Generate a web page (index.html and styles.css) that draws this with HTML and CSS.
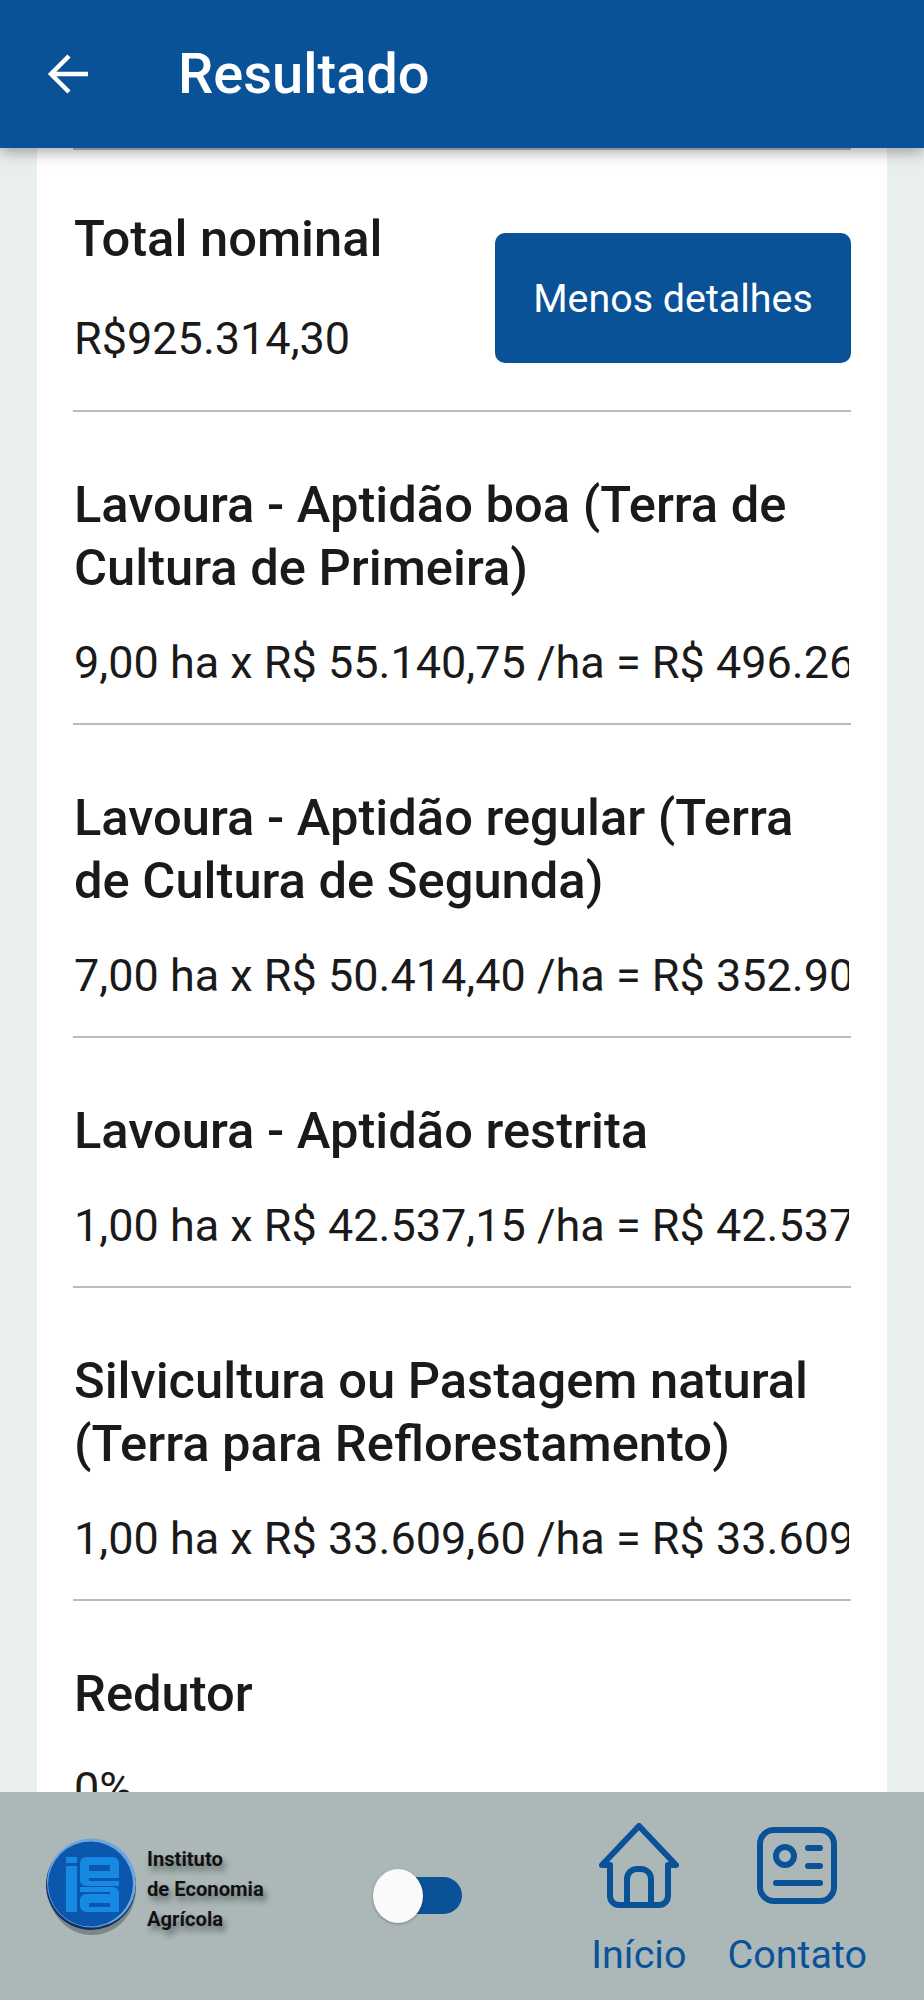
FILE: index.html
```html
<!DOCTYPE html>
<html lang="pt-BR">
<head>
<meta charset="utf-8">
<title>Resultado</title>
<link rel="stylesheet" href="styles.css">
</head>
<body>
<div class="app">
  <header class="appbar">
    <svg class="back" viewBox="0 0 44 44" aria-hidden="true"><path d="M41 22H5M22 4 4 22l18 18"/></svg>
    <h1 class="appbar-title">Resultado</h1>
  </header>
  <main class="content">
    <div class="card">
      <div class="top-rule"></div>
      <section class="summary">
        <div class="summary-text">
          <h2 class="label">Total nominal</h2>
          <p class="value">R$925.314,30</p>
        </div>
        <button class="details-btn" type="button">Menos detalhes</button>
      </section>
      <section class="item">
        <h2 class="label">Lavoura - Aptidão boa (Terra de Cultura de Primeira)</h2>
        <p class="value">9,00 ha x R$ 55.140,75 /ha = R$ 496.266,75</p>
      </section>
      <section class="item">
        <h2 class="label">Lavoura - Aptidão regular (Terra de Cultura de Segunda)</h2>
        <p class="value">7,00 ha x R$ 50.414,40 /ha = R$ 352.900,80</p>
      </section>
      <section class="item">
        <h2 class="label">Lavoura - Aptidão restrita</h2>
        <p class="value">1,00 ha x R$ 42.537,15 /ha = R$ 42.537,15</p>
      </section>
      <section class="item">
        <h2 class="label">Silvicultura ou Pastagem natural (Terra para Reflorestamento)</h2>
        <p class="value">1,00 ha x R$ 33.609,60 /ha = R$ 33.609,60</p>
      </section>
      <section class="item">
        <h2 class="label">Redutor</h2>
        <p class="value">0%</p>
      </section>
    </div>
  </main>
  <footer class="footer">
    <div class="brand">
      <svg class="logo" viewBox="0 0 92 100" aria-hidden="true">
        <ellipse cx="46" cy="51" rx="44" ry="46" fill="#4c5758" opacity=".5"/>
        <circle cx="45" cy="47" r="45" fill="#13305f"/>
        <circle cx="45.500" cy="45" r="44.500" fill="#6ea6e0"/>
        <circle cx="44.500" cy="46" r="42.500" fill="#0a57ad"/>
        <g fill="#1689e2" fill-rule="evenodd">
          <rect x="20" y="19" width="11" height="6"/>
          <rect x="20" y="28" width="11" height="46"/>
          <path d="M40 19h27a6 6 0 0 1 6 6v15H43v3h30v5H40a6 6 0 0 1-6-6V25a6 6 0 0 1 6-6ZM43 27v6h21v-6Z"/>
          <path d="M34 49h33a6 6 0 0 1 6 6v19H40a6 6 0 0 1-6-6v-6a6 6 0 0 1 6-6h24v-2H34ZM43 65v4h21v-4Z"/>
        </g>
      </svg>
      <div class="brand-name">
        <span>Instituto</span>
        <span>de Economia</span>
        <span>Agrícola</span>
      </div>
    </div>
    <div class="switch"><span class="switch-knob"></span></div>
    <nav class="nav">
      <a class="nav-item">
        <svg class="nav-icon" viewBox="0 0 80 85" aria-hidden="true">
          <path d="M3 42 40 3l37 39h-8v31a9 9 0 0 1-9 9H20a9 9 0 0 1-9-9V42Z"/>
          <path d="M28 82V56a10 10 0 0 1 10-10h4a10 10 0 0 1 10 10v26"/>
        </svg>
        <span class="nav-label">Início</span>
      </a>
      <a class="nav-item">
        <svg class="nav-icon" viewBox="0 0 80 85" aria-hidden="true">
          <rect x="3" y="7" width="74" height="71" rx="14"/>
          <circle cx="28" cy="33" r="9"/>
          <path d="M51 25h12M51 43h12M19 60h44"/>
        </svg>
        <span class="nav-label">Contato</span>
      </a>
    </nav>
  </footer>
</div>
</body>
</html>
```
FILE: styles.css
```css
* { box-sizing: border-box; }
html, body { margin: 0; padding: 0; }
body { font-family: Roboto, "Liberation Sans", sans-serif; background: #e9efef; color: #1a1a1a; }
.app { width: 924px; height: 2000px; display: flex; flex-direction: column; overflow: hidden; }

.appbar { flex: 0 0 148px; background: #0a5298; display: flex; align-items: center; padding: 0 0 0 47px; position: relative; z-index: 2; box-shadow: 0 4px 14px rgba(0,0,0,.35); }
.back { width: 44px; height: 44px; fill: none; stroke: #fff; stroke-width: 4.500; }
.appbar-title { margin: 0 0 0 87px; font-size: 56px; font-weight: 500; color: #fff; line-height: 64px; }

.content { flex: 1 1 0; min-height: 0; overflow: hidden; padding: 0 37px; }
.card { background: #fff; padding: 0 36px; min-height: 100%; }
.top-rule { height: 2px; background: #b9bdbd; }

.summary { display: flex; justify-content: space-between; align-items: flex-end; padding: 57px 0 46px 1px; border-bottom: 2px solid #b9bdbd; }
.item { padding: 61px 0 35px 1px; border-bottom: 2px solid #b9bdbd; }
.item:last-child { border-bottom: 0; }
.label { margin: 0; font-size: 50.700px; font-weight: 500; line-height: 63px; color: #1a1a1a; }
.value { margin: 39px 0 0; font-size: 45px; font-weight: 400; line-height: 50px; color: #1a1a1a; white-space: nowrap; }
.item .value { margin-right: 2px; overflow: hidden; }
.summary .value { margin-top: 44px; }

.details-btn { width: 356px; height: 130px; margin-bottom: 1px; border: 0; border-radius: 10px; background: #0a5298; color: #fff; font: 400 39.400px Roboto, "Liberation Sans", sans-serif; }

.footer { flex: 0 0 208px; background: #acb8b8; display: flex; align-items: flex-start; position: relative; z-index: 1; }
.brand { display: flex; align-items: center; margin: 46px 0 0 46px; }
.logo { width: 92px; height: 100px; }
.brand-name { display: flex; flex-direction: column; width: 116px; margin: 2px 0 0 9px; font-size: 20.200px; font-weight: 700; line-height: 30px; color: #111; white-space: nowrap; text-shadow: 3px 5px 6px rgba(0,0,0,.45); }
.switch { width: 72px; height: 37px; margin: 85px 0 0 127px; border-radius: 19px; background: #0a5298; position: relative; flex: none; }
.switch-knob { position: absolute; left: -17px; top: -8px; width: 50px; height: 54px; border-radius: 50%; background: #fafafa; box-shadow: 0 1px 3px rgba(0,0,0,.3); }
.nav { display: flex; margin: 31px 0 0 auto; padding-right: 57px; gap: 41px; }
.nav-item { display: flex; flex-direction: column; align-items: center; }
.nav-icon { width: 80px; height: 85px; fill: none; stroke: #0a5298; stroke-width: 6; stroke-linejoin: round; stroke-linecap: round; }
.nav-label { margin-top: 24px; font-size: 39.500px; line-height: 46px; color: #0a5298; }
```
